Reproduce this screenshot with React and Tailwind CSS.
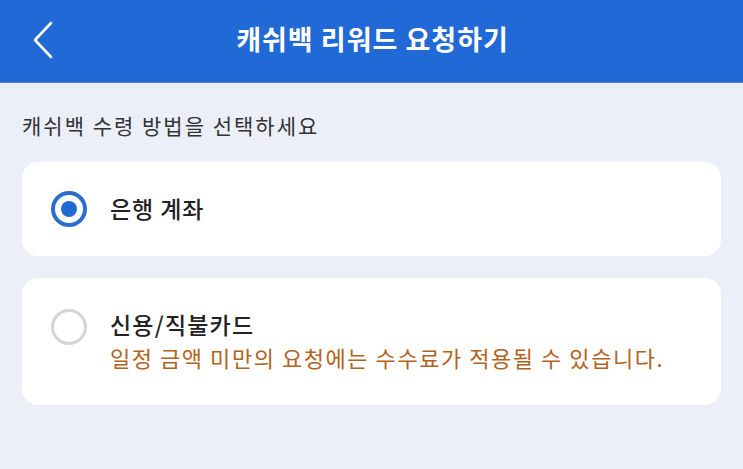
export default function App() {
  return (
    <div className="w-[743px] h-[469px] bg-[#eceef8] overflow-hidden" style={{ fontFamily: '"Noto Sans CJK KR", "Noto Sans", sans-serif' }}>
      {/* Header */}
      <div className="relative h-[83px] bg-[#2169d7] flex items-center justify-center border-b border-[#4d86d9]">
        <button className="absolute left-[30px] top-[20px] w-[26px] h-[40px] flex items-center justify-center">
          <svg width="22" height="38" viewBox="0 0 22 38" fill="none">
            <path d="M19 2 L3 19 L19 36" stroke="white" strokeWidth="2.6" strokeLinecap="round" strokeLinejoin="round" />
          </svg>
        </button>
        <h1 className="text-white text-[27px] font-bold tracking-[1px] mb-[3px] ml-[2px]">캐쉬백 리워드 요청하기</h1>
      </div>

      <div className="px-[22px]">
        <p className="mt-[27px] text-[21px] text-[#333] leading-[30px] tracking-[2px]">캐쉬백 수령 방법을 선택하세요</p>

        {/* Bank account */}
        <div className="mt-[22px] h-[94px] bg-white rounded-[16px] flex items-center pl-[29px]">
          <div className="w-[36px] h-[36px] rounded-full border-[4px] border-[#2a6dd0] flex items-center justify-center">
            <div className="w-[16px] h-[16px] rounded-full bg-[#2169d7]" />
          </div>
          <span className="ml-[23px] text-[23px] font-medium text-[#222] tracking-[0.9px] mb-[2px]">은행 계좌</span>
        </div>

        {/* Card */}
        <div className="mt-[22px] h-[127px] bg-white rounded-[16px] flex items-start pl-[29px] pt-[29px]">
          <div className="mt-[2px] w-[36px] h-[36px] rounded-full border-[3px] border-[#d3d5db] shrink-0" />
          <div className="ml-[23px] flex flex-col pt-[1px]">
            <span className="text-[23px] font-medium text-[#222] leading-[32px] tracking-[1.2px]">신용/직불카드</span>
            <span className="mt-[1px] text-[22px] text-[#b5621c] leading-[32px] tracking-[1.55px]">일정 금액 미만의 요청에는 수수료가 적용될 수 있습니다.</span>
          </div>
        </div>
      </div>
    </div>
  );
}
